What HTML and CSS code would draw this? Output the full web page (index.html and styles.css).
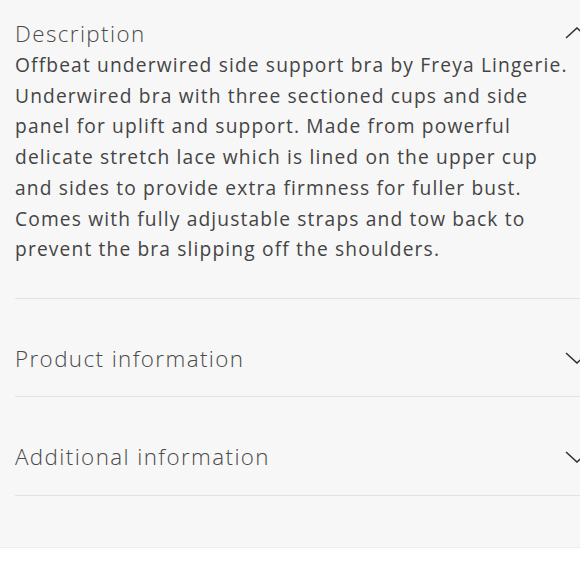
FILE: index.html
```html
<!DOCTYPE html>
<html lang="en">
<head>
    <meta charset="UTF-8">
    <meta name="viewport" content="width=device-width, initial-scale=1.0">
    <title>Product details</title>
    <link rel="stylesheet" href="styles.css">
</head>
<body>

    <div class="details">

        <div class="item open">
            <div class="item-head">
                <h3>Description</h3>
                <svg class="chevron" viewBox="0 0 24 12"><polyline points="1,11 12,1 23,11"/></svg>
            </div>
            <p class="item-body">Offbeat underwired side support bra by Freya Lingerie. Underwired bra with three sectioned cups and side panel for uplift and support. Made from powerful delicate stretch lace which is lined on the upper cup and sides to provide extra firmness for fuller bust. Comes with fully adjustable straps and tow back to prevent the bra slipping off the shoulders.</p>
        </div>

        <div class="item">
            <div class="item-head">
                <h3>Product information</h3>
                <svg class="chevron" viewBox="0 0 24 12"><polyline points="1,1 12,11 23,1"/></svg>
            </div>
        </div>

        <div class="item">
            <div class="item-head">
                <h3>Additional information</h3>
                <svg class="chevron" viewBox="0 0 24 12"><polyline points="1,1 12,11 23,1"/></svg>
            </div>
        </div>

    </div>

</body>
</html>
```

FILE: styles.css
```css
html, body {
    margin: 0;
    overflow: hidden;
    background: #fff;
}
body {
    font-family: "Open Sans", Arial, sans-serif;
    color: #444;
}
.details {
    background: #f7f7f7;
    width: 600px;
    height: 548px;
    padding-left: 15px;
    box-sizing: border-box;
    border-bottom: 1px solid #eee;
}
.item {
    width: 574px;
    border-bottom: 1.5px solid #e2e2e2;
    padding: 42.5px 0 21px;
}
.item.open {
    padding: 16px 0 33px;
}
.item-head {
    display: flex;
    align-items: center;
    justify-content: space-between;
    height: 34px;
}
h3 {
    margin: 0;
    font-size: 22.4px;
    font-weight: 300;
    letter-spacing: 1.4px;
    color: #4a4a4a;
}
.chevron {
    width: 24px;
    height: 12px;
    fill: none;
    stroke: #333;
    stroke-width: 1.6;
}
.item-body {
    margin: 0;
    max-width: 565px;
    font-size: 19.2px;
    line-height: 30.7px;
    letter-spacing: 1.15px;
    color: #444;
}
```
